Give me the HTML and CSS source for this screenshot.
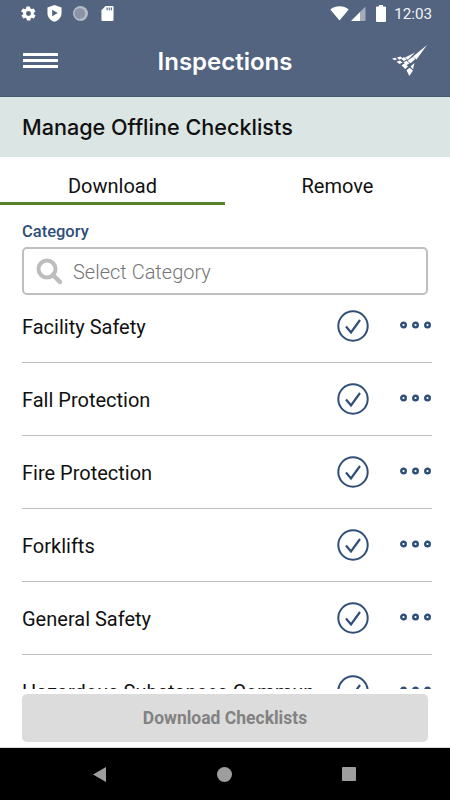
FILE: index.html
```html
<!DOCTYPE html>
<html lang="en">
<head>
<meta charset="utf-8">
<title>Inspections</title>
<link rel="stylesheet" href="styles.css">
</head>
<body>
<div class="app">
  <header class="top">
    <div class="status">
      <div class="status-left">
        <svg class="gear" width="17" height="17" viewBox="0 0 24 24"><path fill="#fff" d="M19.400 13c.1-.3.1-.7.1-1s0-.7-.1-1l2.100-1.600c.2-.2.2-.4.100-.6l-2-3.500c-.1-.2-.4-.3-.6-.2l-2.500 1c-.5-.4-1.100-.7-1.700-1L14 2.400c0-.2-.2-.4-.5-.4h-4c-.3 0-.5.2-.5.4l-.4 2.700c-.6.2-1.200.6-1.700 1l-2.500-1c-.2-.1-.5 0-.6.2l-2 3.500c-.1.2-.1.5.1.6L4.600 11c0 .3-.1.7-.1 1s0 .7.1 1l-2.100 1.600c-.2.2-.2.4-.1.6l2 3.500c.1.2.4.3.6.2l2.500-1c.5.4 1.100.7 1.700 1l.4 2.700c0 .2.2.4.5.4h4c.3 0 .5-.2.5-.4l.4-2.700c.6-.2 1.200-.6 1.700-1l2.500 1c.2.1.5 0 .6-.2l2-3.500c.1-.2.1-.5-.1-.6L19.400 13zM12 15.500a3.500 3.500 0 1 1 0-7 3.500 3.500 0 0 1 0 7z"/></svg>
        <svg class="shield" width="15" height="17" viewBox="0 0 16 18"><path fill="#fff" fill-rule="evenodd" d="M8 0l7.500 2.600v6c0 4.200-3 7.700-7.500 9.200C3.500 16.300.5 12.800.5 8.600v-6zM5.500 5v7l6-3.500z"/></svg>
        <svg class="disc" width="15" height="15" viewBox="0 0 16 16"><circle cx="8" cy="8" r="8" fill="#b4bac6"/><circle cx="7.200" cy="8" r="6" fill="#8a94a9" stroke="#c0c5d0" stroke-width=".9" stroke-dasharray="1 1"/></svg>
        <svg class="sd" width="13" height="17" viewBox="0 0 14 17"><path fill="#fff" d="M5 .5h7.500a1 1 0 0 1 1 1v14a1 1 0 0 1-1 1h-11a1 1 0 0 1-1-1V5z"/><path fill="#526480" d="M6 2h1.200v3H6zM8.300 2h1.200v3H8.300zM10.600 2h1.200v3h-1.200z"/></svg>
      </div>
      <div class="status-right">
        <svg width="19" height="15" viewBox="0 0 19 15"><path fill="#fff" d="M9.500 14.500L.3 3.500C3 1.300 6 .3 9.500.3s6.500 1 9.200 3.200z"/></svg>
        <svg class="signal" width="15" height="15" viewBox="0 0 15 15"><path fill="#fff" d="M0 15L9 6v9z"/><path fill="#a3acbd" d="M9 6l5.500-5.500V15H9z"/></svg>
        <svg class="battery" width="10" height="17" viewBox="0 0 10 17"><path fill="#fff" d="M3 0h4v1.500h2a1 1 0 0 1 1 1V16a1 1 0 0 1-1 1H1a1 1 0 0 1-1-1V2.500a1 1 0 0 1 1-1h2z"/></svg>
        <span class="clock">12:03</span>
      </div>
    </div>
    <div class="bar">
      <div class="burger"><i></i><i></i><i></i></div>
      <h1 class="title">Inspections</h1>
      <svg class="logo" width="36" height="32" viewBox="0 0 36 32"><path fill="#fff" d="M35 0L21 11.500l3.500 3zM23 7.500L13 12.500l2.800 2.200zM0 13.500l3.500-.8 1.500 1.500-2.500 1zM5 12.500l3.500-1 2 1.800-3.500 1.400zM12 12l2.700 2.500-3 1.500-2.300-2zM15.500 15.800l5.500-4 2.200 2.300-.8 1-4 3.200zM4.500 16.800l3.500-1.400 2.500 2.100-3 1.500zM9.500 20.300l3-1.700 3.500 3-2.800 2.300zM11.500 17.200l3-1.500 3 2.600-3 2zM14.500 25.300l3-2.500 3.500 2.800-3.700 5.500zM18.500 21.500l4-3.500-1.500 6.200z"/></svg>
    </div>
  </header>
  <div class="band"><h2 class="band-title">Manage Offline Checklists</h2></div>
  <nav class="tabs">
    <div class="tab active">Download</div>
    <div class="tab">Remove</div>
  </nav>
  <main class="content">
    <label class="field-label">Category</label>
    <div class="search">
      <svg width="26" height="26" viewBox="0 0 26 26"><circle cx="11" cy="11" r="8.500" fill="none" stroke="#bdbdbd" stroke-width="4"/><path d="M17 17l7 7" stroke="#bdbdbd" stroke-width="4.500" stroke-linecap="round"/></svg>
      <span class="placeholder">Select Category</span>
    </div>
    <ul class="list">
      <li class="row"><span class="name">Facility Safety</span><svg class="check" width="32" height="32" viewBox="0 0 32 32"><circle cx="16" cy="16" r="14.700" fill="none" stroke="#2f4f7a" stroke-width="2"/><path d="M9 16.500l5 6L23 10" fill="none" stroke="#2f4f7a" stroke-width="2.200"/></svg><svg class="dots" width="31" height="8" viewBox="0 0 31 8"><g fill="none" stroke="#2f4f7a" stroke-width="2.400"><circle cx="3.500" cy="4" r="2.300"/><circle cx="15.500" cy="4" r="2.300"/><circle cx="27.500" cy="4" r="2.300"/></g></svg></li>
      <li class="row"><span class="name">Fall Protection</span><svg class="check" width="32" height="32" viewBox="0 0 32 32"><circle cx="16" cy="16" r="14.700" fill="none" stroke="#2f4f7a" stroke-width="2"/><path d="M9 16.500l5 6L23 10" fill="none" stroke="#2f4f7a" stroke-width="2.200"/></svg><svg class="dots" width="31" height="8" viewBox="0 0 31 8"><g fill="none" stroke="#2f4f7a" stroke-width="2.400"><circle cx="3.500" cy="4" r="2.300"/><circle cx="15.500" cy="4" r="2.300"/><circle cx="27.500" cy="4" r="2.300"/></g></svg></li>
      <li class="row"><span class="name">Fire Protection</span><svg class="check" width="32" height="32" viewBox="0 0 32 32"><circle cx="16" cy="16" r="14.700" fill="none" stroke="#2f4f7a" stroke-width="2"/><path d="M9 16.500l5 6L23 10" fill="none" stroke="#2f4f7a" stroke-width="2.200"/></svg><svg class="dots" width="31" height="8" viewBox="0 0 31 8"><g fill="none" stroke="#2f4f7a" stroke-width="2.400"><circle cx="3.500" cy="4" r="2.300"/><circle cx="15.500" cy="4" r="2.300"/><circle cx="27.500" cy="4" r="2.300"/></g></svg></li>
      <li class="row"><span class="name">Forklifts</span><svg class="check" width="32" height="32" viewBox="0 0 32 32"><circle cx="16" cy="16" r="14.700" fill="none" stroke="#2f4f7a" stroke-width="2"/><path d="M9 16.500l5 6L23 10" fill="none" stroke="#2f4f7a" stroke-width="2.200"/></svg><svg class="dots" width="31" height="8" viewBox="0 0 31 8"><g fill="none" stroke="#2f4f7a" stroke-width="2.400"><circle cx="3.500" cy="4" r="2.300"/><circle cx="15.500" cy="4" r="2.300"/><circle cx="27.500" cy="4" r="2.300"/></g></svg></li>
      <li class="row"><span class="name">General Safety</span><svg class="check" width="32" height="32" viewBox="0 0 32 32"><circle cx="16" cy="16" r="14.700" fill="none" stroke="#2f4f7a" stroke-width="2"/><path d="M9 16.500l5 6L23 10" fill="none" stroke="#2f4f7a" stroke-width="2.200"/></svg><svg class="dots" width="31" height="8" viewBox="0 0 31 8"><g fill="none" stroke="#2f4f7a" stroke-width="2.400"><circle cx="3.500" cy="4" r="2.300"/><circle cx="15.500" cy="4" r="2.300"/><circle cx="27.500" cy="4" r="2.300"/></g></svg></li>
      <li class="row"><span class="name">Hazardous Substances Commun</span><svg class="check" width="32" height="32" viewBox="0 0 32 32"><circle cx="16" cy="16" r="14.700" fill="none" stroke="#2f4f7a" stroke-width="2"/><path d="M9 16.500l5 6L23 10" fill="none" stroke="#2f4f7a" stroke-width="2.200"/></svg><svg class="dots" width="31" height="8" viewBox="0 0 31 8"><g fill="none" stroke="#2f4f7a" stroke-width="2.400"><circle cx="3.500" cy="4" r="2.300"/><circle cx="15.500" cy="4" r="2.300"/><circle cx="27.500" cy="4" r="2.300"/></g></svg></li>
    </ul>
    <div class="footer"><button class="download">Download Checklists</button></div>
  </main>
  <div class="navbar">
    <svg width="13" height="15" viewBox="0 0 13 15"><path fill="#9e9e9e" d="M0 7.500L13 0v15z"/></svg>
    <svg width="15" height="15" viewBox="0 0 15 15"><circle cx="7.500" cy="7.500" r="7.500" fill="#9e9e9e"/></svg>
    <svg width="14" height="14" viewBox="0 0 14 14"><rect width="14" height="14" rx="1" fill="#9e9e9e"/></svg>
  </div>
</div>
</body>
</html>
```
FILE: styles.css
```css
* { box-sizing: border-box; }
html, body { margin: 0; padding: 0; }
body { font-family: Roboto, "Liberation Sans", sans-serif; background: #fff; }
.app { width: 450px; height: 800px; display: flex; flex-direction: column; overflow: hidden; }

.top { height: 97px; background: #526480; border-bottom: 1px solid #47586f; flex: none; }
.status { height: 24px; padding: 3px 18px 0 20px; display: flex; justify-content: space-between; align-items: center; }
.status-left { display: flex; align-items: center; }
.shield { margin-left: 10px; }
.disc { margin-left: 11px; }
.sd { margin-left: 13px; }
.status-right { display: flex; align-items: center; color: #fff; }
.signal { margin-left: 2px; }
.battery { margin-left: 10px; }
.clock { margin-left: 8px; font-size: 15.200px; font-weight: 400; color: #f3f4f7; }
.bar { height: 72px; padding: 0 22px 0 23px; display: flex; align-items: center; justify-content: space-between; }
.burger { width: 35px; display: flex; flex-direction: column; gap: 3px; }
.burger i { display: block; height: 3px; background: #fff; }
.title { margin: 0; padding-top: 2px; color: #fff; font-family: Inter, sans-serif; font-weight: 600; font-size: 24px; }
.logo { margin-top: 2px; }

.band { height: 60px; background: #dbe5e3; flex: none; display: flex; align-items: center; padding-left: 22px; }
.band-title { margin: 0; font-family: Inter, sans-serif; font-weight: 500; font-size: 21.600px; color: #111; }

.tabs { display: flex; height: 48px; flex: none; }
.tab { flex: 1; display: flex; align-items: center; justify-content: center; font-size: 20px; color: #111; padding-top: 13px; }
.tab.active { border-bottom: 3px solid #558327; }
.tab:not(.active) { padding-bottom: 3px; }

.content { flex: 1; min-height: 0; display: flex; flex-direction: column; padding: 0 18px 0 22px; }
.field-label { display: block; margin-top: 17px; height: 25px; font-size: 16.500px; font-weight: 500; color: #2f4f7a; line-height: 19px; }
.search { height: 48px; margin-right: 4px; flex: none; border: 2px solid #bfbfbf; border-radius: 5px; display: flex; align-items: center; padding-left: 12px; gap: 11px; background: #fff; position: relative; z-index: 1; }
.placeholder { padding-top: 2px; font-size: 20px; font-weight: 300; color: #757575; }

.list { list-style: none; margin: -5px 0 0; padding: 0; flex: 1; min-height: 0; overflow: hidden; }
.row { height: 73px; padding-bottom: 1px; border-bottom: 1px solid #bdbdbd; display: flex; align-items: center; }
.name { flex: 1; padding-top: 2px; font-size: 20px; color: #111; white-space: nowrap; }
.check { margin-right: 31px; margin-left: 8px; flex: none; }
.dots { flex: none; margin-right: 1px; margin-bottom: 2px; }

.footer { height: 58px; flex: none; margin-right: 4px; padding-top: 5px; }
.download { display: block; width: 100%; height: 48px; border: 0; border-radius: 5px; background: #dcdcdc; color: #828282; font-family: Roboto, sans-serif; font-size: 17.500px; font-weight: 700; }

.navbar { height: 53px; flex: none; background: #000; border-top: 1px solid #d8d8d8; display: flex; align-items: center; padding: 0 94px 0 93px; justify-content: space-between; }
```
